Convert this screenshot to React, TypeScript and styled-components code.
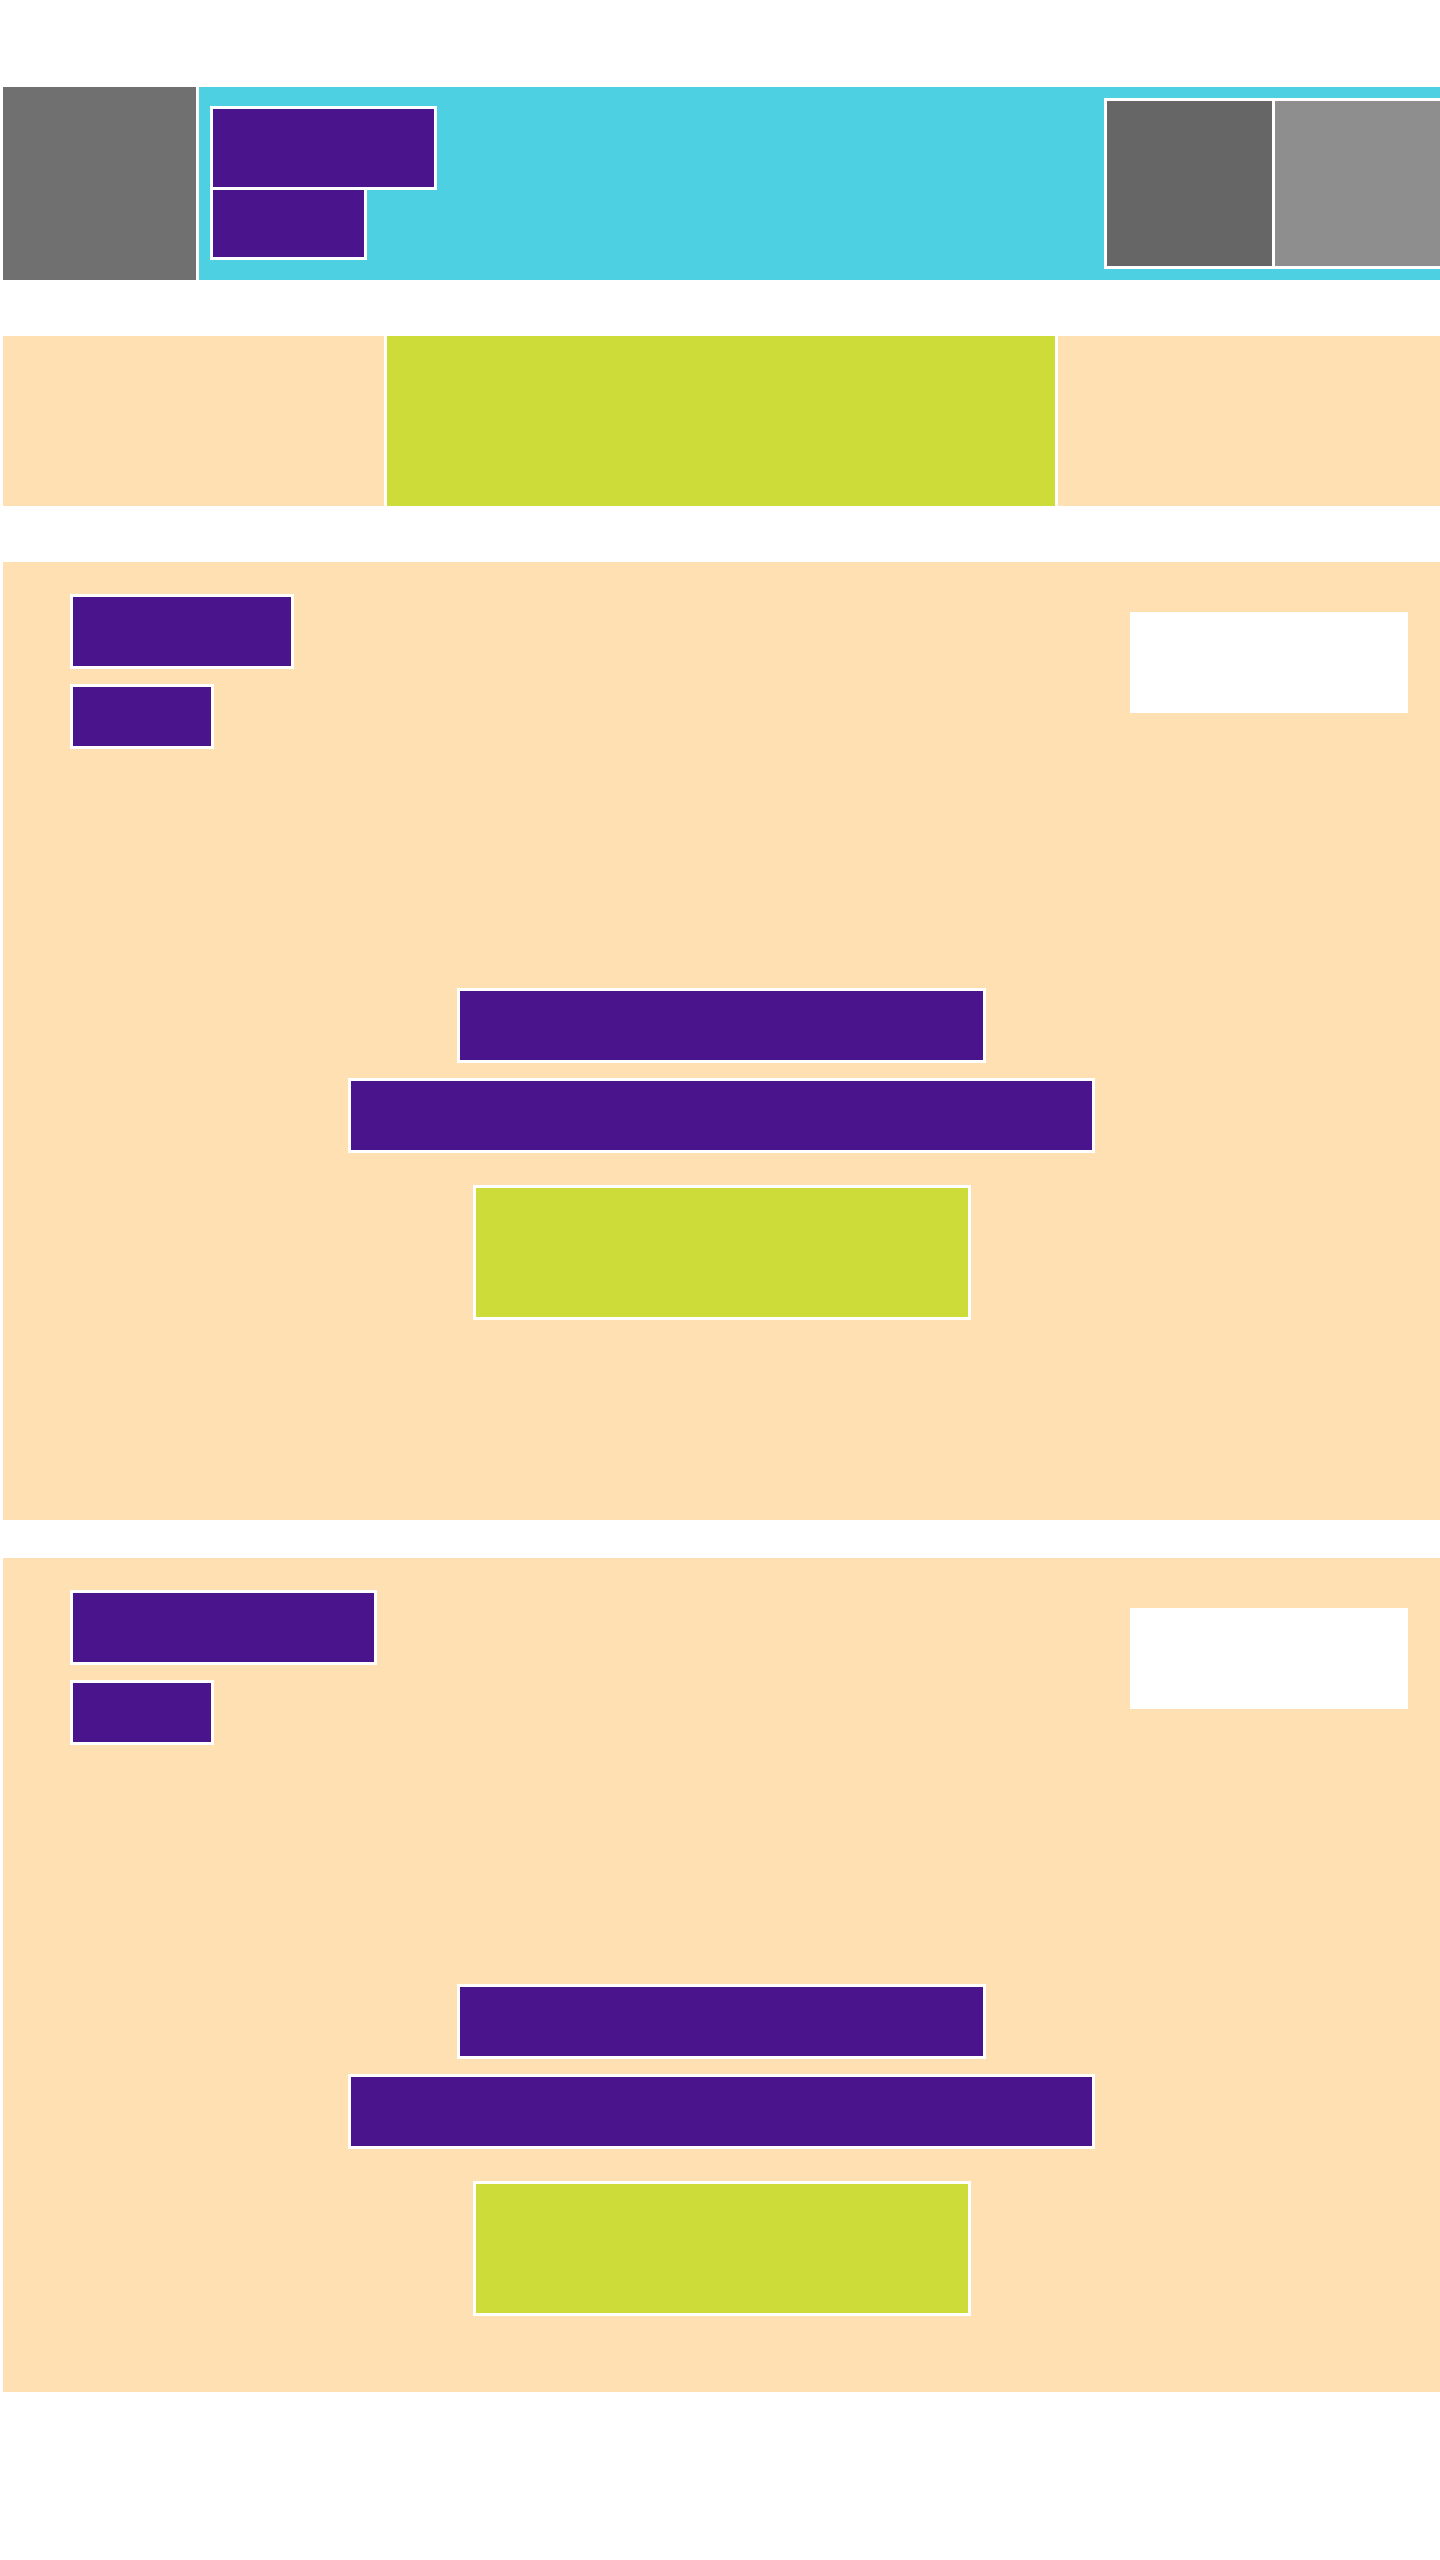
import React from "react";
import styled, { createGlobalStyle } from "styled-components";

const GlobalStyle = createGlobalStyle`
  html, body {
    margin: 0;
    padding: 0;
    background: #ffffff;
    overflow-x: hidden;
    font-family: "Liberation Sans", Arial, sans-serif;
  }
  *, *::before, *::after { box-sizing: border-box; }
`;

const Page = styled.div`
  display: flex;
  flex-direction: column;
  padding-top: 87px;
  width: 1440px;
`;

const Header = styled.header`
  display: flex;
  gap: 3px;
  padding-left: 3px;
  height: 193px;
`;

const Logo = styled.div`
  width: 193px;
  flex: none;
  background: #707070;
`;

const Banner = styled.div`
  flex: 1;
  background: #4dd0e1;
  display: flex;
  justify-content: space-between;
  align-items: flex-start;
  padding: 11px 0 0 11px;
`;

const TitleStack = styled.div`
  display: flex;
  flex-direction: column;
  align-items: flex-start;
  margin-top: 8px;
`;

const TextBlock = styled.div<{ $w: number; $h: number; $overlap?: boolean }>`
  width: ${(p) => p.$w}px;
  height: ${(p) => p.$h}px;
  background: #4a148c;
  border: 3px solid #ffffff;
  margin-top: ${(p) => (p.$overlap ? "-3px" : "0")};
`;

const Thumbs = styled.div`
  display: flex;
  margin-right: -3px;
`;

const Thumb = styled.div<{ $tone: string; $first?: boolean }>`
  width: 171px;
  height: 171px;
  background: ${(p) => p.$tone};
  border: 3px solid #ffffff;
  margin-left: ${(p) => (p.$first ? "0" : "-3px")};
`;

const Strip = styled.section`
  display: grid;
  grid-template-columns: 381px 668px 1fr;
  gap: 3px;
  padding-left: 3px;
  height: 170px;
  margin-top: 56px;
`;

const StripCell = styled.div<{ $accent?: boolean }>`
  background: ${(p) => (p.$accent ? "#cddc39" : "#ffe0b2")};
`;

const Card = styled.section<{ $top: number; $bottom: number }>`
  margin-top: ${(p) => p.$top}px;
  margin-left: 3px;
  background: #ffe0b2;
  display: flex;
  flex-direction: column;
  padding-bottom: ${(p) => p.$bottom}px;
`;

const CardHeader = styled.div`
  display: flex;
  justify-content: space-between;
  align-items: flex-start;
  padding: 32px 32px 0 67px;
`;

const HeadingCol = styled.div`
  display: flex;
  flex-direction: column;
  align-items: flex-start;
  gap: 15px;
`;

const Tag = styled.div`
  width: 278px;
  height: 101px;
  margin-top: 18px;
  background: #ffffff;
`;

const Center = styled.div`
  display: flex;
  flex-direction: column;
  align-items: center;
  margin-top: 239px;
`;

const CallToAction = styled.div`
  width: 498px;
  height: 135px;
  margin-top: 32px;
  background: #cddc39;
  border: 3px solid #ffffff;
`;

const Spaced = styled.div`
  margin-top: 15px;
`;

function PromoCard({ top, bottom, titleWidth }: { top: number; bottom: number; titleWidth: number }) {
  return (
    <Card $top={top} $bottom={bottom}>
      <CardHeader>
        <HeadingCol>
          <TextBlock $w={titleWidth} $h={75} />
          <TextBlock $w={144} $h={65} />
        </HeadingCol>
        <Tag />
      </CardHeader>
      <Center>
        <TextBlock $w={529} $h={75} />
        <Spaced>
          <TextBlock $w={747} $h={75} />
        </Spaced>
        <CallToAction />
      </Center>
    </Card>
  );
}

export default function App() {
  return (
    <>
      <GlobalStyle />
      <Page>
        <Header>
          <Logo />
          <Banner>
            <TitleStack>
              <TextBlock $w={227} $h={84} />
              <TextBlock $w={157} $h={73} $overlap />
            </TitleStack>
            <Thumbs>
              <Thumb $tone="#666666" $first />
              <Thumb $tone="#8e8e8e" />
            </Thumbs>
          </Banner>
        </Header>
        <Strip>
          <StripCell />
          <StripCell $accent />
          <StripCell />
        </Strip>
        <PromoCard top={56} bottom={200} titleWidth={224} />
        <PromoCard top={38} bottom={76} titleWidth={307} />
      </Page>
    </>
  );
}
